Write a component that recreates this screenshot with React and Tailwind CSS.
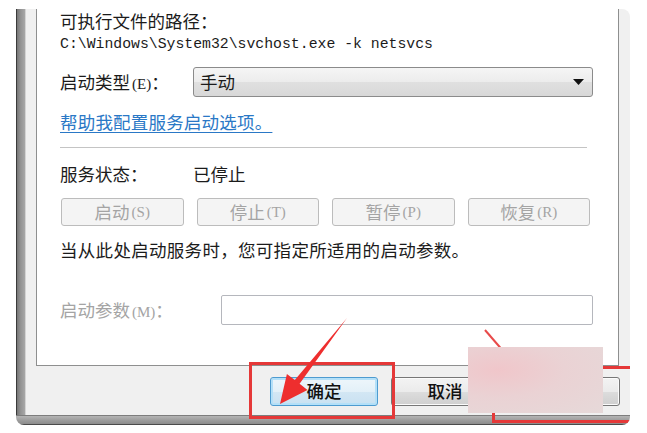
import React from 'react';

const cjk = "font-['Noto_Sans_CJK_SC','Noto_Sans',sans-serif]";

// mnemonic like (E) rendered in a small serif, as in the old dialog font
const Key = ({ k }) => (
  <span className="font-['Liberation_Serif',serif] text-[15px] ml-[2px]">({k})</span>
);

const ActionBtn = ({ label, k }) => (
  <div className="h-[28px] rounded-[3px] border border-[#bcbcbc] bg-[#f4f4f4] flex items-center justify-center text-[#a4a4a4] leading-none">
    {label}
    <Key k={k} />
  </div>
);

const DialogBtn = ({ children, focus }) => (
  <div
    className={
      focus
        ? 'w-[108px] h-[29px] shrink-0 rounded-[3px] border border-[#4d9bd0] shadow-[inset_0_0_0_2px_#b4e0f8] bg-[linear-gradient(#eef6fb,#e3f0f8_50%,#d3e7f4_50%,#c9e1f1)] flex items-center justify-center text-[#111] font-medium'
        : 'w-[108px] h-[29px] shrink-0 rounded-[3px] border border-[#777] shadow-[inset_0_0_0_1px_#fbfbfb] bg-[linear-gradient(#f3f3f3,#ebebeb_50%,#dddddd_50%,#cfcfcf)] flex items-center justify-center text-[#111] font-medium'
    }
  >
    {children}
  </div>
);

export default function App() {
  return (
    <div className={`relative w-[647px] h-[433px] bg-white overflow-hidden ${cjk} text-[17.5px] text-[#1b1b1b]`}>
      {/* the screenshot of the properties dialog */}
      <div className="relative ml-[16px] mt-[9px] w-[614px] h-[416px] flex flex-col rounded-tr-[8px] rounded-b-[8px] overflow-hidden">
        <div className="flex flex-1 min-h-0">
          <div className="w-[10px] border-l border-[#3a3a3a] border-r border-r-[#d4d4d4] bg-[linear-gradient(to_right,#767676,#939393_45%,#a8a8a8)]" />
          <div className="flex-1 bg-[#f0f0f0] flex flex-col">
            {/* tab page */}
            <div className="ml-[10px] w-[583px] h-[357px] bg-white border-x border-b border-[#8e8f8f] pl-[23px] pt-[1px] flex flex-col">
              <div className="leading-[22px] whitespace-nowrap">可执行文件的路径：</div>
              <div className="h-[24px] leading-[24px] font-['Liberation_Mono',monospace] text-[14.8px] whitespace-pre">
                C:\Windows\System32\svchost.exe -k netsvcs
              </div>

              <div className="flex items-center h-[30px] mt-[11px]">
                <div className="w-[133px] whitespace-nowrap">
                  启动类型<Key k="E" />：
                </div>
                <div className="w-[400px] h-[30px] rounded-[3px] border border-[#8b8b8b] bg-[linear-gradient(#f5f5f5,#ececec_50%,#e0e0e0_50%,#d8d8d8)] flex items-center justify-between pl-[6px] pr-[8px]">
                  <span>手动</span>
                  <svg width="11" height="6" viewBox="0 0 11 6">
                    <polygon points="0,0 11,0 5.5,6" fill="#111" />
                  </svg>
                </div>
              </div>

              <div className="mt-[13px] h-[24px] leading-[24px] text-[#2a78c6] underline underline-offset-[3px] tracking-[0.2px]">
                帮助我配置服务启动选项。
              </div>

              <div className="mt-[13px] w-[527px] h-px bg-[#c4c4c4]" />

              <div className="mt-[14px] h-[24px] leading-[24px] flex">
                <div className="w-[133px]">服务状态：</div>
                <div>已停止</div>
              </div>

              <div className="mt-[12px] ml-px w-[529px] grid grid-cols-4 gap-[13px]">
                <ActionBtn label="启动" k="S" />
                <ActionBtn label="停止" k="T" />
                <ActionBtn label="暂停" k="P" />
                <ActionBtn label="恢复" k="R" />
              </div>

              <div className="mt-[12px] h-[24px] leading-[24px] whitespace-nowrap tracking-[0.3px]">
                当从此处启动服务时，您可指定所适用的启动参数。
              </div>

              <div className="mt-[33px] flex items-center h-[30px]">
                <div className="w-[161px] text-[#a4a4a4] whitespace-nowrap">
                  启动参数<Key k="M" />：
                </div>
                <div className="w-[372px] h-[30px] rounded-[2px] border border-[#b5b7bd] bg-white" />
              </div>
            </div>

            {/* dialog buttons */}
            <div className="flex justify-end gap-[13px] pr-[10px] pt-[11px]">
              <DialogBtn focus>确定</DialogBtn>
              <DialogBtn>取消</DialogBtn>
              <DialogBtn>应用</DialogBtn>
            </div>
          </div>
        </div>
        <div className="h-[10px] border-t border-[#7d7d7d] border-b border-b-[#4a4a4a] bg-[linear-gradient(#b4b4b4,#9a9a9a_60%,#8c8c8c)]" />

        {/* annotations drawn over the screenshot */}
        <div className="absolute left-[233px] top-[353px] w-[146px] h-[57px] border-[3px] border-[#e53838]" />
        <svg className="absolute left-0 top-0 pointer-events-none" width="614" height="416" viewBox="16 9 614 416">
          <polygon points="347,318 299.6,383.7 307.5,389.9 280,404 286.9,373.9 294.8,380.1" fill="#ee2e2e" />
          <line x1="485" y1="330" x2="504" y2="352" stroke="#e84a4a" strokeWidth="2" />
        </svg>
        <div className="absolute left-[476px] top-[357px] w-[170px] h-[57px] border-[3px] border-[#e53838]" />
        <div className="absolute left-[452px] top-[338px] w-[135px] h-[66px] bg-[radial-gradient(ellipse_at_22%_35%,#f0c6ca_0%,#ead2d4_45%,#e6d9d9_100%)]" />
      </div>
    </div>
  );
}
